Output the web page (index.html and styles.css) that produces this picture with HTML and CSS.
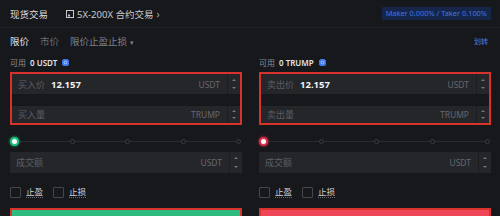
FILE: index.html
```html
<!DOCTYPE html>
<html lang="zh">
<head>
<meta charset="utf-8">
<link rel="stylesheet" href="styles.css">
</head>
<body>
<div class="page">
  <header class="topbar">
    <div class="toptabs">
      <span class="toptab active">现货交易</span>
      <span class="toptab">
        <svg class="ticon" width="8" height="8" viewBox="0 0 8 8"><rect x="0.5" y="0.5" width="7" height="7" fill="none" stroke="#c8c9cc" stroke-width="1"/><rect x="2" y="4.5" width="2" height="2" fill="#c8c9cc"/></svg>5X-200X 合约交易 <span class="chev">›</span>
      </span>
    </div>
    <div class="fee">Maker 0.000% / Taker 0.100%</div>
  </header>

  <nav class="ordertabs">
    <span class="otab active">限价</span>
    <span class="otab">市价</span>
    <span class="otab dim">限价止盈止损 <span class="caret">▾</span></span>
    <span class="transfer">划转</span>
  </nav>

  <div class="cols">
    <section class="col">
      <div class="avail"><span class="lbl">可用</span><span class="val">0 USDT</span><span class="dot"></span></div>
      <div class="mark">
        <div class="field">
          <span class="flabel">买入价</span><span class="fval">12.157</span><span class="unit">USDT</span>
          <span class="step"><i class="up"></i><i class="dn"></i></span>
        </div>
        <div class="field short">
          <span class="flabel">买入量</span><span class="fval"></span><span class="unit">TRUMP</span>
          <span class="step"><i class="up"></i><i class="dn"></i></span>
        </div>
      </div>
      <div class="slider">
        <span class="track"></span>
        <span class="knob buy"></span><span class="tick"></span><span class="tick"></span><span class="tick"></span><span class="tick"></span>
      </div>
      <div class="field total">
        <span class="flabel">成交额</span><span class="fval"></span><span class="unit">USDT</span>
        <span class="step"><i class="up"></i><i class="dn"></i></span>
      </div>
      <div class="checks">
        <label class="chk"><span class="box"></span><span class="ctext">止盈</span></label>
        <label class="chk"><span class="box"></span><span class="ctext">止损</span></label>
      </div>
      <div class="btn buybtn"></div>
    </section>

    <section class="col">
      <div class="avail"><span class="lbl">可用</span><span class="val">0 TRUMP</span><span class="dot"></span></div>
      <div class="mark">
        <div class="field">
          <span class="flabel">卖出价</span><span class="fval">12.157</span><span class="unit">USDT</span>
          <span class="step"><i class="up"></i><i class="dn"></i></span>
        </div>
        <div class="field short">
          <span class="flabel">卖出量</span><span class="fval"></span><span class="unit">TRUMP</span>
          <span class="step"><i class="up"></i><i class="dn"></i></span>
        </div>
      </div>
      <div class="slider">
        <span class="track"></span>
        <span class="knob sell"></span><span class="tick"></span><span class="tick"></span><span class="tick"></span><span class="tick"></span>
      </div>
      <div class="field total">
        <span class="flabel">成交额</span><span class="fval"></span><span class="unit">USDT</span>
        <span class="step"><i class="up"></i><i class="dn"></i></span>
      </div>
      <div class="checks">
        <label class="chk"><span class="box"></span><span class="ctext">止盈</span></label>
        <label class="chk"><span class="box"></span><span class="ctext">止损</span></label>
      </div>
      <div class="btn sellbtn"></div>
    </section>
  </div>
</div>
</body>
</html>
```

FILE: styles.css
```css
* { box-sizing: border-box; margin: 0; padding: 0; }
html, body { background: #17181c; }
body {
  width: 500px; height: 216px; overflow: hidden;
  font-family: "Noto Sans", "Noto Sans CJK SC", sans-serif;
  color: #d6d7da;
}
.page { width: 500px; }

.topbar {
  height: 28px;
  display: flex; align-items: center; justify-content: space-between;
  padding: 0 9px 0 10px;
  border-bottom: 1px solid #202125;
}
.toptabs { display: flex; align-items: center; gap: 18px; }
.toptab { font-size: 9.5px; color: #c9cacd; display: flex; align-items: center; }
.toptab.active { color: #dcdde0; }
.ticon { margin-right: 3px; }
.chev { margin-left: 3px; font-size: 10px; color: #a9aaad; }
.fee {
  background: #16264a; color: #3f76e0;
  font-size: 7.4px; height: 13px; line-height: 13px;
  padding: 0 4px; border-radius: 1px;
}

.ordertabs {
  height: 25px;
  display: flex; align-items: center;
  padding: 0 12px 0 10px;
}
.otab { font-size: 9.5px; color: #6c6e74; margin-right: 11px; }
.otab.active { color: #e4e5e8; }
.otab.dim { color: #7f8187; }
.caret { font-size: 7px; }
.transfer { margin-left: auto; font-size: 7px; color: #4a7fe6; }

.cols { display: flex; gap: 17px; padding: 0 9px 0 10px; }
.col { width: 232px; display: flex; flex-direction: column; }

.avail { height: 19px; display: flex; align-items: center; gap: 4px; font-size: 8px; }
.avail .lbl { color: #8b8d93; }
.avail .val { color: #e2e3e6; font-weight: 600; }
.dot {
  width: 7px; height: 7px; border-radius: 50%;
  background: #2f6fe8; box-shadow: inset 0 0 0 1.5px #2f6fe8, inset 0 0 0 2.5px #9fc0ff;
  margin-left: 1px;
}

.mark {
  border: 2px solid #d8322c;
  height: 53px;
  display: flex; flex-direction: column; justify-content: space-between;
}

.field {
  height: 20px; background: #25262a;
  display: flex; align-items: center;
  padding-left: 6px;
  font-size: 9px;
}
.field.short { height: 17px; }
.flabel { color: #5c5e65; }
.fval { color: #f0f1f3; font-weight: 700; margin-left: 6px; font-size: 9.5px; }
.unit { margin-left: auto; color: #66686e; margin-right: 7px; font-size: 8.5px; }
.step {
  width: 13px; align-self: stretch;
  border-left: 1px solid #1c1d21;
  display: flex; flex-direction: column; justify-content: space-around; align-items: center;
  padding: 2px 0;
}
.step i { width: 0; height: 0; border-left: 2px solid transparent; border-right: 2px solid transparent; }
.step .up { border-bottom: 2px solid #74767c; }
.step .dn { border-top: 2px solid #74767c; }

.slider {
  position: relative; height: 27px;
  display: flex; align-items: center; justify-content: space-between;
  padding: 6px 1px 0 0;
}
.track { position: absolute; left: 4px; right: 2px; top: 16px; height: 1px; background: #2a2b30; }
.knob { position: relative; width: 9px; height: 9px; border-radius: 50%; background: #fff; }
.knob.buy { border: 2px solid #1fc27e; box-shadow: 0 0 3px #1fc27e; }
.knob.sell { border: 2px solid #d8324a; box-shadow: 0 0 3px #d8324a; }
.tick { position: relative; width: 5px; height: 5px; border-radius: 50%; border: 1px solid #3a3b40; background: #17181c; }

.field.total { height: 21px; }

.checks { height: 35px; display: flex; align-items: center; gap: 10px; padding-top: 3px; }
.chk { display: flex; align-items: center; gap: 5px; }
.box { width: 11px; height: 11px; border: 1px solid #44464b; border-radius: 1px; }
.ctext { font-size: 8.5px; color: #cfd0d3; border-bottom: 1px dotted #6a6c72; line-height: 11px; }

.btn { height: 20px; border: 2px solid #d8322c; }
.buybtn { background: #2dbb7f; }
.sellbtn { background: #ef4657; }
```
